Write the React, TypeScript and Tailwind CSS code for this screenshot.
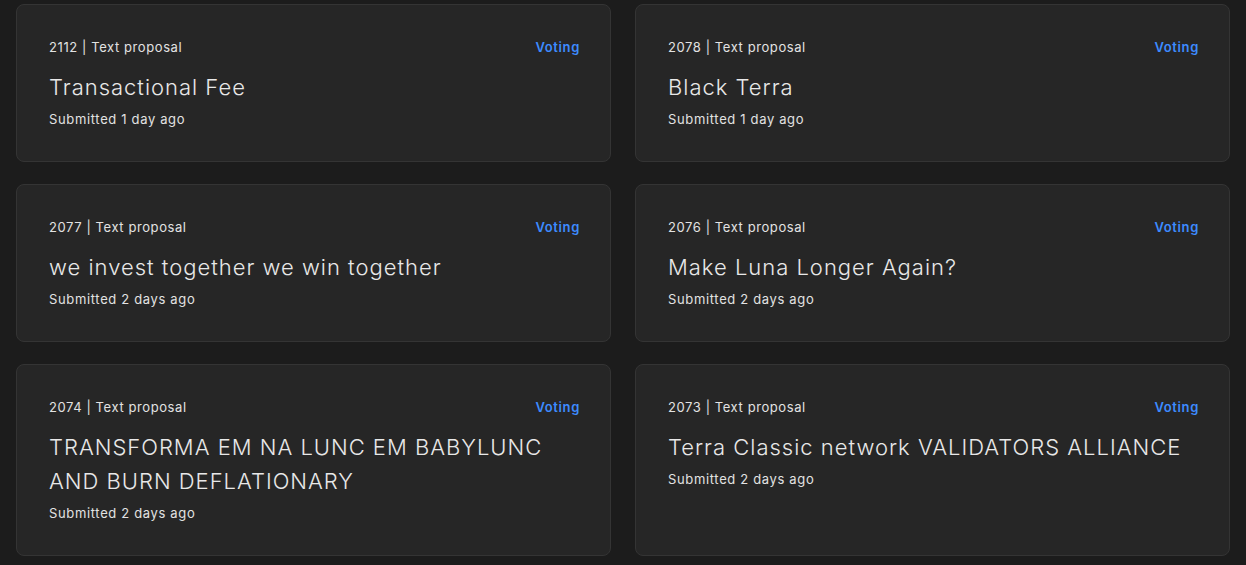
const proposals = [
  { id: 2112, title: "Transactional Fee", submitted: "1 day ago" },
  { id: 2078, title: "Black Terra", submitted: "1 day ago" },
  { id: 2077, title: "we invest together we win together", submitted: "2 days ago" },
  { id: 2076, title: "Make Luna Longer Again?", submitted: "2 days ago" },
  { id: 2074, title: "TRANSFORMA EM NA LUNC EM BABYLUNC AND BURN DEFLATIONARY", submitted: "2 days ago" },
  { id: 2073, title: "Terra Classic network VALIDATORS ALLIANCE", submitted: "2 days ago" },
]

function ProposalCard({ id, title, submitted }: { id: number; title: string; submitted: string }) {
  return (
    <div className="flex flex-col rounded-lg border border-[#343434] bg-[#262626] p-8">
      <div className="flex items-center justify-between text-[13px] leading-5 tracking-[0.045em] text-[#e2e2e2]">
        <span>
          {id} | Text proposal
        </span>
        <span className="-mr-[2px] font-semibold tracking-[0.05em] text-[#3d8bff]">Voting</span>
      </div>
      <h2 className="mt-[13px] text-[22px] leading-[34px] font-light tracking-[0.045em] text-[#e8e8e8]">
        {title}
      </h2>
      <p className="mt-[5px] text-[13px] leading-5 tracking-[0.05em] text-[#e2e2e2]">Submitted {submitted}</p>
    </div>
  )
}

export default function App() {
  return (
    <div
      className="min-h-screen bg-[#1c1c1c] px-4 pt-1 pb-6"
      style={{ fontFamily: 'Inter, "Liberation Sans", sans-serif' }}
    >
      <div className="grid grid-cols-2 gap-x-6 gap-y-[22px]">
        {proposals.map((p) => (
          <ProposalCard key={p.id} {...p} />
        ))}
      </div>
    </div>
  )
}
